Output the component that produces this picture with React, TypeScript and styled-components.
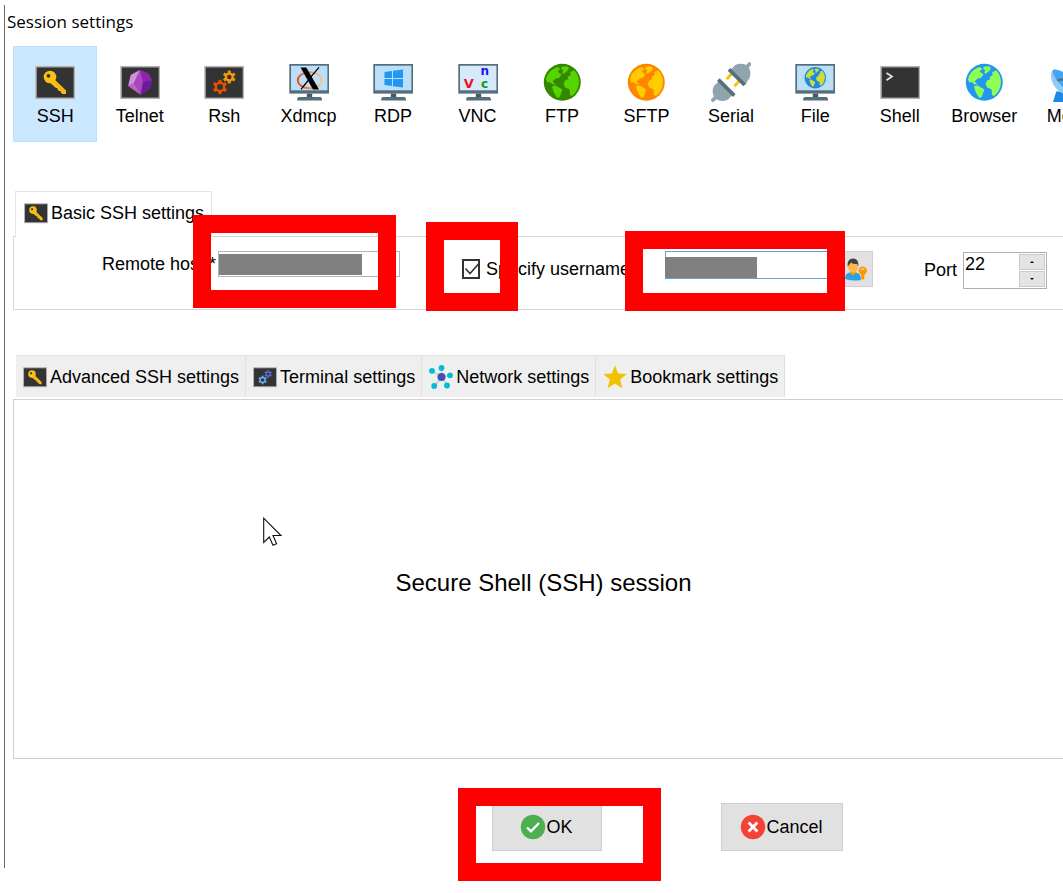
import React from "react";
import styled, { createGlobalStyle } from "styled-components";

const GlobalStyle = createGlobalStyle`
  * { box-sizing: border-box; }
  body { margin: 0; background: #fff; overflow-x: hidden; }
  body, button, input { font-family: "Liberation Sans", Arial, sans-serif; font-size: 18px; color: #000; }
  svg { display: block; flex: none; }
`;

const Page = styled.div`
  overflow: hidden;
  padding: 5px 0 25px 4px;
`;

const Dialog = styled.main`
  width: calc(100% + 11px);
  border-left: 1px solid #6a6a6a;
  padding-left: 8px;
  padding-bottom: 17px;
`;

const Title = styled.h1`
  margin: 0 0 0 -6px;
  height: 41px;
  padding-top: 5px;
  font: 400 17px/24px "Open Sans", "Noto Sans", sans-serif;
`;

const Toolbar = styled.nav`
  display: grid;
  grid-template-columns: repeat(13, 1fr);
  margin-right: -37px;
`;

const ToolButton = styled.button<{ $active?: boolean }>`
  display: flex;
  flex-direction: column;
  align-items: center;
  gap: 3px;
  height: 96px;
  padding: 15px 0 0;
  line-height: 22px;
  border: 1px solid ${(p) => (p.$active ? "#b8dfff" : "transparent")};
  background: ${(p) => (p.$active ? "#cce8ff" : "transparent")};
`;

const BasicTabs = styled.div`
  position: relative;
  display: flex;
  margin-top: 49px;
  padding-left: 2px;
`;

const BasicTab = styled.button`
  display: flex;
  align-items: center;
  gap: 3px;
  height: 46px;
  margin-bottom: -1px;
  padding: 0 7px 3px 8px;
  line-height: 22px;
  border: 1px solid #e4e4e4;
  border-bottom: 0;
  background: #fff;
`;

const BasicPanel = styled.section`
  display: flex;
  align-items: flex-start;
  height: 74px;
  padding: 14px 26px 0 88px;
  border: 1px solid #d6d6d6;
`;

const HostGroup = styled.div`
  display: flex;
  align-items: center;
  flex: 1 1 298px;
  margin-right: 62px;
  line-height: 26px;
`;

const FieldLabel = styled.label`
  flex: none;
  width: 116px;
  white-space: nowrap;
`;

const CheckLabel = styled.label`
  position: relative;
  display: flex;
  align-items: center;
  flex: none;
  gap: 6px;
  width: 168px;
  height: 36px;
  margin-right: 35px;
  white-space: nowrap;
`;

const CheckBox = styled.input`
  appearance: none;
  width: 20px;
  height: 20px;
  margin: 0;
  border: 2px solid #333;
  background: #fff;
`;

const CheckMark = styled.svg`
  position: absolute;
  left: 0;
  top: 8px;
  pointer-events: none;
`;

const UserGroup = styled.div`
  display: flex;
  flex: 1 1 208px;
  margin-right: 51px;
`;

const Field = styled.div`
  position: relative;
  flex: 1;
  min-width: 0;
`;

const TextInput = styled.input<{ $focused?: boolean }>`
  display: block;
  width: 100%;
  height: ${(p) => (p.$focused ? 28 : 26)}px;
  border: 1px solid ${(p) => (p.$focused ? "#5ea3da" : "#b4b4b4")};
  background: #fff;
  outline: none;
`;

const Redaction = styled.span<{ $left: number; $top: number; $width: number }>`
  position: absolute;
  left: ${(p) => p.$left}px;
  top: ${(p) => p.$top}px;
  width: ${(p) => p.$width}px;
  height: 21px;
  background: #808080;
`;

const Highlight = styled.span<{ $inset: string }>`
  position: absolute;
  z-index: 2;
  inset: ${(p) => p.$inset};
  border: 18px solid #f00;
  pointer-events: none;
`;

const UserButton = styled.button`
  display: flex;
  align-items: center;
  flex: none;
  width: 30px;
  height: 36px;
  padding: 0;
  border: 1px solid #cfcfcf;
  background: #e1e1e1;
`;

const PortGroup = styled.div`
  display: flex;
  align-items: center;
  flex: none;
  gap: 6px;
  height: 38px;
`;

const Spinner = styled.div`
  display: flex;
  width: 84px;
  height: 37px;
  border: 1px solid #b0b0b0;
`;

const PortInput = styled.input`
  flex: 1;
  min-width: 0;
  height: 24px;
  padding: 0 0 0 1px;
  border: 0;
  outline: none;
`;

const SpinButtons = styled.div`
  display: grid;
  grid-template-rows: 1fr 1fr;
  width: 28px;
  padding: 1px;
  gap: 1px;
`;

const SpinButton = styled.button`
  display: grid;
  place-items: center;
  padding: 0;
  border: 1px solid #cacaca;
  background: #e4e4e4;
`;

const TabRow = styled.div`
  display: flex;
  margin-top: 45px;
  padding-left: 3px;
`;

const Tab = styled.button`
  display: flex;
  align-items: center;
  gap: 3px;
  height: 42px;
  padding: 0 6px 0 7px;
  line-height: 22px;
  white-space: nowrap;
  border: 0;
  border-top: 1px solid #e2e2e2;
  border-right: 1px solid #e0e0e0;
  background: #efefef;
`;

const SessionPanel = styled.section`
  position: relative;
  display: flex;
  align-items: center;
  justify-content: center;
  height: 360px;
  margin-top: 2px;
  padding-top: 8px;
  border: 1px solid #cfcfcf;
`;

const SessionTitle = styled.h2`
  margin: 0;
  font-size: 24px;
  font-weight: 400;
`;

const Pointer = styled.svg`
  position: absolute;
  left: 249px;
  top: 117px;
`;

const Footer = styled.footer`
  display: flex;
  gap: 119px;
  margin-top: 44px;
  padding-left: calc(50% - 52px);
`;

const ButtonSlot = styled.div`
  position: relative;
`;

const ActionButton = styled.button<{ $wide?: boolean }>`
  display: flex;
  align-items: center;
  justify-content: center;
  width: ${(p) => (p.$wide ? 122 : 110)}px;
  height: 48px;
  padding: 0;
  border: 1px solid #cecece;
  background: #e1e1e1;
`;

type IconProps = { size?: number };

const Svg = ({ size = 40, children }: IconProps & { children: React.ReactNode }) => (
  <svg width={size} height={size} viewBox="0 0 40 40" aria-hidden="true">
    {children}
  </svg>
);

const Screen = () => (
  <rect x="1" y="4.7" width="38.4" height="31.6" fill="#333" stroke="#b3b3b3" strokeWidth="1.5" />
);

const KeyIcon = ({ size }: IconProps) => (
  <Svg size={size}>
    <Screen />
    <path d="M17.5 15.5 L31 28.5 V32 H27.5 L25.8 30.5 V29 H24 L22.5 27.5 V26 H21 L13.5 19.5 Z" fill="#fbc013" />
    <circle cx="15" cy="15" r="6.3" fill="#fbc013" />
    <circle cx="13.5" cy="13.8" r="1.9" fill="#333" />
    <path d="M20 20.5 L29 29.5" stroke="#e0a010" strokeWidth=".8" />
  </Svg>
);

const GemIcon = () => (
  <Svg>
    <Screen />
    <path d="M20 8 L10.7 13 L8.2 24 L20.7 32.7 L30 27 L32 18 L28.5 11.5 Z" fill="#9c27b0" />
    <path d="M20 8 L10.7 13 L8.2 24 L14 21 Z" fill="#ce93d8" />
    <path d="M20 8 L14 21 L23 20 Z" fill="#ab47bc" />
    <path d="M20 8 L28.5 11.5 L32 18 L23 20 Z" fill="#8e24aa" />
    <path d="M8.2 24 L14 21 L20.7 32.7 Z" fill="#ba68c8" />
    <path d="M14 21 L23 20 L20.7 32.7 Z" fill="#ab47bc" />
    <path d="M23 20 L32 18 L30 27 L20.7 32.7 Z" fill="#6a1b9a" />
  </Svg>
);

const Gear = ({ x, y, r, color }: { x: number; y: number; r: number; color: string }) => (
  <g transform={`translate(${x} ${y})`} stroke={color} fill="none">
    <circle r={r - 2.6} strokeWidth="2.4" />
    {[0, 60, 120, 180, 240, 300].map((a) => (
      <path key={a} d={`M0 ${-r + 2} V${-r - 0.4}`} strokeWidth="3" transform={`rotate(${a})`} />
    ))}
  </g>
);

const GearsIcon = ({ size, a = "#f59a0c", b = "#e65100" }: IconProps & { a?: string; b?: string }) => (
  <Svg size={size}>
    <Screen />
    <Gear x={25.3} y={15} r={6} color={a} />
    <Gear x={16} y={25} r={6.8} color={b} />
  </Svg>
);

const Monitor = ({ screen = "#bbdefb" }: { screen?: string }) => (
  <>
    <rect x="0.3" y="2" width="39.7" height="29.6" fill="#546e7a" />
    <rect x="2" y="3.7" width="36.4" height="24.6" fill={screen} />
    <rect x="17.8" y="31.6" width="5.4" height="3.6" fill="#455a64" />
    <path d="M9.6 35 H31.6 L33 36.4 V38.4 H8.2 V36.4 Z" fill="#546e7a" />
  </>
);

const XIcon = () => (
  <Svg>
    <defs>
      <linearGradient id="ring">
        <stop offset="0" stopColor="#e8501e" />
        <stop offset="1" stopColor="#fbc880" />
      </linearGradient>
    </defs>
    <Monitor />
    <ellipse cx="20.8" cy="18.2" rx="12" ry="8" fill="none" stroke="url(#ring)" strokeWidth="1.9" />
    <path d="M11.5 5.4 H17.3 L30 27.4 H24 Z" fill="#000" />
    <path d="M30 5.4 L20.4 16.6 M19.5 18 L12 27.3" stroke="#000" strokeWidth="1.3" />
  </Svg>
);

const WindowsIcon = () => (
  <Svg>
    <Monitor />
    <path d="M11.5 10 L19 8.9 V16 H11.5 Z M20 8.7 L30 7.4 V16 H20 Z M11.5 17 H19 V24 L11.5 23 Z M20 17 H30 V25.5 L20 24.2 Z" fill="#2196f3" />
  </Svg>
);

const VncIcon = () => (
  <Svg>
    <Monitor screen="#d6e9fa" />
    <g fontFamily="DejaVu Sans, sans-serif" fontWeight="700" textAnchor="middle">
      <text x="10.8" y="26" fontSize="13" fill="#f01018">V</text>
      <text x="26.8" y="12.6" fontSize="12" fill="#1414e8">n</text>
      <text x="26.5" y="26" fontSize="12" fill="#0a9a10">c</text>
    </g>
  </Svg>
);

const Globe = ({ sea, land }: { sea: string; land: string }) => (
  <>
    <circle cx="60" cy="60" r="55.5" fill={sea} />
    <g fill={land}>
      <path d="M21 31 Q32 17 47 14 L54 20 L46 28 L53 34 L58 36 L50 47 L42 48 L35 53 L31 58 L36 64 L43 67 L30 66 L22 59 L15 61 L11 52 Q13 40 21 31 Z" />
      <path d="M58 14 Q70 10 79 15 Q80 24 71 29 L64 35 L60 31 L63 24 L57 20 Z" />
      <path d="M29 72 L40 70 L49 75 L60 82 L57 91 L52 104 L45 107 L38 96 L33 86 Z" />
      <path d="M96 24 Q108 37 110 56 Q110 78 98 93 L89 101 L83 98 L82 82 L68 75 L64 64 L69 54 L78 51 L76 44 L85 38 L84 29 Z" />
    </g>
  </>
);

const GlobeIcon = (p: { sea: string; land: string }) => (
  <Svg>
    <g transform="translate(0.3 0.3) scale(.333)"><Globe {...p} /></g>
  </Svg>
);

const PlugIcon = () => (
  <svg width="40" height="40" viewBox="0 0 120 120" aria-hidden="true">
    <path d="M106 16 L119 3 M14 106 L2 118" stroke="#90a4ae" strokeWidth="11" />
    <path d="M61 36 L47 52 M84 58 L70 73" stroke="#ffc107" strokeWidth="9" />
    <path d="M56 27 L73 9 Q90 2 106 9 L114 17 Q122 34 115 49 L103 68 Z" fill="#90a4ae" />
    <path d="M22 59 L9 71 Q1 88 9 104 L16 112 Q32 121 50 113 L65 99 Z" fill="#90a4ae" />
    <path d="M54 22 L101 69 M22 53 L70 101" stroke="#546e7a" strokeWidth="11" />
  </svg>
);

const FileIcon = () => (
  <Svg>
    <Monitor />
    <g transform="translate(8.7 4.2) scale(.193)"><Globe sea="#1e88e5" land="#cddc39" /></g>
  </Svg>
);

const ShellIcon = () => (
  <Svg>
    <Screen />
    <path d="M6.5 11 L12 14.5 L6.5 18.2" fill="none" stroke="#e6e6e6" strokeWidth="1.7" />
  </Svg>
);

const DishIcon = () => (
  <svg width="40" height="40" viewBox="0 0 120 120" aria-hidden="true">
    <path d="M22 88 L12 120 H72 L64 92 Z" fill="#1e88e5" />
    <path d="M12 24 C0 34 6 66 26 84 C46 102 78 106 90 98 Z" fill="#90caf9" />
    <path d="M12 24 C24 18 52 32 70 52 C88 72 96 92 90 98 C80 102 56 92 38 72 C20 52 8 32 12 24 Z" fill="#42a5f5" />
    <path d="M24 55 L80 46 L60 90" fill="none" stroke="#546e7a" strokeWidth="6" />
  </svg>
);

const NetworkIcon = () => (
  <svg width="24" height="24" viewBox="0 0 24 24" aria-hidden="true">
    <path d="M12.5 12 L3 6 M12.5 12 V3 M12.5 12 L21 10.5 M12.5 12 L18 20.7 M12.5 12 L5 22" stroke="#c3ccd1" strokeWidth="1.4" />
    <circle cx="12.5" cy="12" r="4" fill="#3f51b5" />
    <g fill="#00bcd4">
      <circle cx="3" cy="5.8" r="2.9" /><circle cx="12.5" cy="3" r="2.9" /><circle cx="21" cy="10.3" r="2.9" />
      <circle cx="18" cy="20.5" r="2.9" /><circle cx="5.2" cy="21" r="2.9" />
    </g>
  </svg>
);

const StarIcon = () => (
  <svg width="24" height="24" viewBox="0 0 24 24" aria-hidden="true">
    <path d="M12 .5 L15.2 8.6 L23.8 9 L17.1 14.5 L19.4 23.2 L12 18.4 L4.6 23.2 L6.9 14.5 L.2 9 L8.8 8.6 Z" fill="#f2c200" />
  </svg>
);

const UserIcon = () => (
  <svg width="24" height="24" viewBox="0 0 24 24" aria-hidden="true">
    <path d="M1 22 Q1 16 6 15.5 H12 Q17 16 17 23 Q9 24.5 1 22 Z" fill="#29a3e8" />
    <path d="M6 14 H12 V16 L9 18.5 L6 16 Z" fill="#ff9800" />
    <ellipse cx="9" cy="9.5" rx="5" ry="6.2" fill="#ffb74d" />
    <path d="M3.6 9.5 Q3 1.5 9 1.5 Q15 1.5 14.4 9.5 L13 7 Q9 7.5 7 5.5 L5 8 Z" fill="#424242" />
    <path d="M17.2 15 H20.4 V21.5 L18.8 23 L17.2 21.5 Z" fill="#ff9800" />
    <circle cx="18.7" cy="13.8" r="4.2" fill="#ff9800" />
    <path d="M17 12.2 H20.4" stroke="#e1e1e1" strokeWidth="1.2" />
  </svg>
);

const OkIcon = () => (
  <svg width="26" height="26" viewBox="0 0 26 26" aria-hidden="true">
    <circle cx="13" cy="13" r="12.2" fill="#4caf50" />
    <path d="M7 13.5 L11 17.3 L19 9" fill="none" stroke="#fff" strokeWidth="2.4" />
  </svg>
);

const CancelIcon = () => (
  <svg width="26" height="26" viewBox="0 0 26 26" aria-hidden="true">
    <circle cx="13" cy="13" r="12.2" fill="#f44336" />
    <path d="M8.6 8.6 L17.4 17.4 M17.4 8.6 L8.6 17.4" stroke="#fff" strokeWidth="2.8" />
  </svg>
);

const tools: [string, React.ReactNode][] = [
  ["SSH", <KeyIcon />],
  ["Telnet", <GemIcon />],
  ["Rsh", <GearsIcon />],
  ["Xdmcp", <XIcon />],
  ["RDP", <WindowsIcon />],
  ["VNC", <VncIcon />],
  ["FTP", <GlobeIcon sea="#358600" land="#55d400" />],
  ["SFTP", <GlobeIcon sea="#ff8500" land="#ffcc00" />],
  ["Serial", <PlugIcon />],
  ["File", <FileIcon />],
  ["Shell", <ShellIcon />],
  ["Browser", <GlobeIcon sea="#2196f3" land="#8fff55" />],
  ["Mosh", <DishIcon />],
];

const tabs: [string, React.ReactNode][] = [
  ["Advanced SSH settings", <KeyIcon size={24} />],
  ["Terminal settings", <GearsIcon size={24} a="#5c6bd0" b="#64b5f6" />],
  ["Network settings", <NetworkIcon />],
  ["Bookmark settings", <StarIcon />],
];

export default function App() {
  return (
    <Page>
      <GlobalStyle />
      <Dialog>
        <Title>Session settings</Title>
        <Toolbar>
          {tools.map(([name, icon], i) => (
            <ToolButton key={name} $active={i === 0}>
              {icon}
              {name}
            </ToolButton>
          ))}
        </Toolbar>

        <BasicTabs>
          <BasicTab><KeyIcon size={24} />Basic SSH settings</BasicTab>
        </BasicTabs>
        <BasicPanel>
          <HostGroup>
            <FieldLabel htmlFor="host">Remote host *</FieldLabel>
            <Field>
              <TextInput id="host" />
              <Redaction $left={1} $top={3} $width={143} />
              <Highlight $inset="-36px 4px -31px -25px" />
            </Field>
          </HostGroup>
          <CheckLabel>
            <CheckBox type="checkbox" defaultChecked />
            <CheckMark width="20" height="20" viewBox="0 0 20 20">
              <path d="M3.5 9.5 L8 14.5 L16.5 5" fill="none" stroke="#333" strokeWidth="1.6" />
            </CheckMark>
            Specify username
            <Highlight $inset="-29px 112px -24px -36px" />
          </CheckLabel>
          <UserGroup>
            <Field>
              <TextInput $focused aria-label="Username" />
              <Redaction $left={0} $top={6} $width={92} />
              <Highlight $inset="-20px -2px -24px -40px" />
            </Field>
            <UserButton aria-label="Manage users"><UserIcon /></UserButton>
          </UserGroup>
          <PortGroup>
            <label htmlFor="port">Port</label>
            <Spinner>
              <PortInput id="port" defaultValue="22" />
              <SpinButtons>
                <SpinButton aria-label="Increase">
                  <svg width="6" height="4"><path d="M1 3 L3 1 L5 3 Z" /></svg>
                </SpinButton>
                <SpinButton aria-label="Decrease">
                  <svg width="6" height="4"><path d="M1 1 L3 3 L5 1 Z" /></svg>
                </SpinButton>
              </SpinButtons>
            </Spinner>
          </PortGroup>
        </BasicPanel>

        <TabRow>
          {tabs.map(([name, icon]) => (
            <Tab key={name}>{icon}{name}</Tab>
          ))}
        </TabRow>
        <SessionPanel>
          <SessionTitle>Secure Shell (SSH) session</SessionTitle>
          <Pointer width="20" height="30" viewBox="0 0 20 30">
            <path d="M.7 1.2 V25.5 L6.3 20 L10 28.3 L13.6 26.7 L10 18.5 H18 Z" fill="#fff" stroke="#111" strokeWidth="1.1" />
          </Pointer>
        </SessionPanel>

        <Footer>
          <ButtonSlot>
            <ActionButton><OkIcon />OK</ActionButton>
            <Highlight $inset="-15px -59px -30px -34px" />
          </ButtonSlot>
          <ActionButton $wide><CancelIcon />Cancel</ActionButton>
        </Footer>
      </Dialog>
    </Page>
  );
}
